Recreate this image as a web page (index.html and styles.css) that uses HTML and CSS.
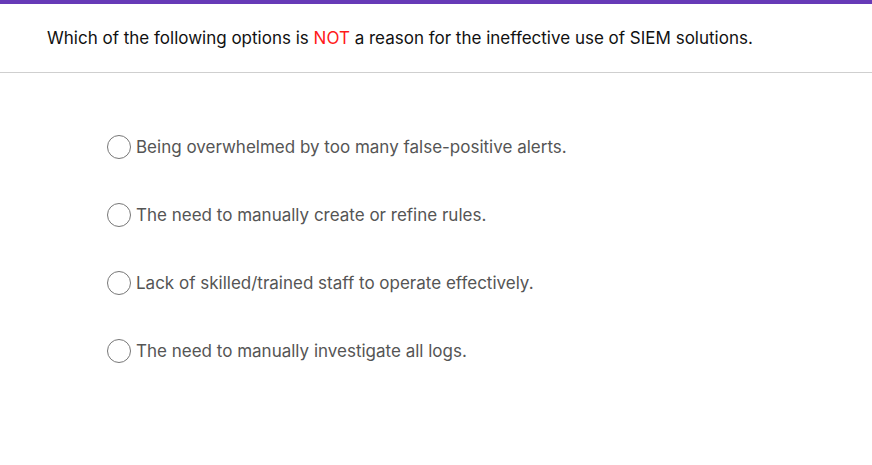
FILE: index.html
```html
<!DOCTYPE html>
<html>
<head>
<meta charset="utf-8">
<link rel="stylesheet" href="styles.css">
</head>
<body>
<div class="topbar"></div>
<header class="question">
  <p>Which of the following options is <span class="not">NOT</span> a reason for the ineffective use of SIEM solutions.</p>
</header>
<ul class="options">
  <li class="option"><span class="radio"></span><span class="label">Being overwhelmed by too many false-positive alerts.</span></li>
  <li class="option"><span class="radio"></span><span class="label">The need to manually create or refine rules.</span></li>
  <li class="option"><span class="radio"></span><span class="label">Lack of skilled/trained staff to operate effectively.</span></li>
  <li class="option"><span class="radio"></span><span class="label">The need to manually investigate all logs.</span></li>
</ul>
</body>
</html>
```
FILE: styles.css
```css
html, body {
  margin: 0;
  padding: 0;
  background: #fff;
  font-family: Inter, "Noto Sans", sans-serif;
}
.topbar {
  height: 4px;
  background: #673ab7;
}
.question {
  border-bottom: 1px solid #cfcfcf;
  height: 68px;
  display: flex;
  align-items: center;
  padding-left: 47px;
}
.question p {
  margin: 0;
  font-size: 17px;
  color: #111;
}
.not {
  color: #ff1a1a;
}
.options {
  list-style: none;
  margin: 0;
  padding: 62px 0 0 107px;
  display: flex;
  flex-direction: column;
  gap: 44px;
}
.option {
  display: flex;
  align-items: center;
  gap: 5px;
  height: 24px;
}
.radio {
  width: 24px;
  height: 24px;
  box-sizing: border-box;
  border: 1.3px solid #777;
  border-radius: 50%;
  flex: none;
}
.label {
  font-size: 17px;
  color: #555;
}
```
